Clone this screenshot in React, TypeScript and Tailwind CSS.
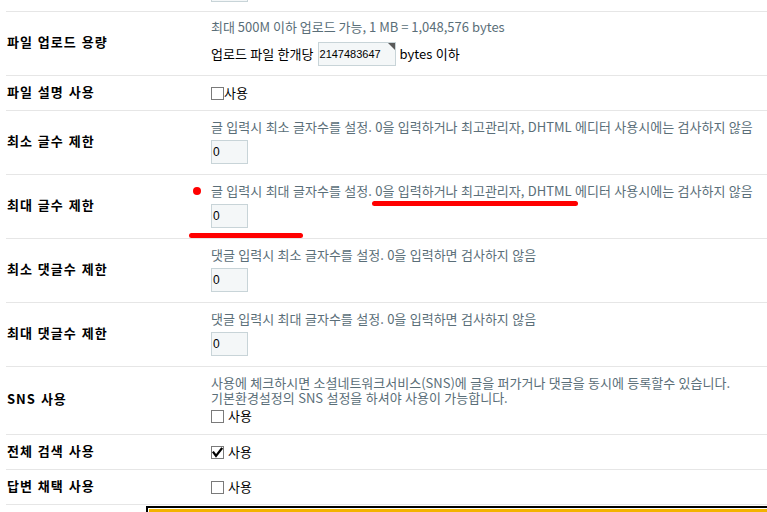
import React from "react";

function CheckBox({ checked }: { checked?: boolean }) {
  return (
    <span className="relative inline-block w-[13px] h-[13px] shrink-0 border border-[#7a7a7a] bg-white">
      {checked && (
        <svg className="absolute left-0 top-0" width="11" height="11" viewBox="0 0 11 11">
          <path d="M1.5 5.5 L4 9 L9.5 1.8" fill="none" stroke="#000" strokeWidth="2.2" strokeLinecap="square" />
        </svg>
      )}
    </span>
  );
}

function NumBox({ value }: { value: string }) {
  return (
    <div className="flex items-center w-[37px] h-[24px] border border-[#c8d4d8] bg-[#f4f7f8] pl-[1px] font-['Liberation_Sans',sans-serif] text-[12px] text-black">
      {value}
    </div>
  );
}

function Label({ children }: { children: React.ReactNode }) {
  return (
    <div className="w-[205px] shrink-0 pl-[1px] pb-[3px] flex items-center font-bold text-[13px] tracking-[1px] [word-spacing:1px] text-black">
      {children}
    </div>
  );
}

export default function App() {
  return (
    <div className="relative h-[512px] w-[767px] overflow-hidden bg-white font-['Noto_Sans_CJK_KR','Noto_Sans',sans-serif] text-[13px] [word-spacing:0.5px]">
      <div className="ml-[6px]">
        {/* partial top row */}
        <div className="flex h-[12px] overflow-hidden border-b border-[#e6e6e6]">
          <div className="w-[205px] shrink-0" />
          <div className="mt-[-22px]">
            <NumBox value="" />
          </div>
        </div>

        {/* 파일 업로드 용량 */}
        <div className="flex h-[64px] border-b border-[#e6e6e6]">
          <Label>파일 업로드 용량</Label>
          <div className="pt-[7px]">
            <div className="leading-[16px] text-[#5a6e78] [word-spacing:0px]">최대 500M 이하 업로드 가능, 1 MB = 1,048,576 bytes</div>
            <div className="mt-[7px] flex items-center gap-[4px] text-black">
              <span>업로드 파일 한개당</span>
              <div className="relative flex items-center w-[78px] h-[24px] border border-[#c8d4d8] bg-[#f4f7f8] pl-[1px] font-['Liberation_Sans',sans-serif] text-[11px] text-black">
                2147483647
                <svg className="absolute right-0 top-0" width="7" height="7" viewBox="0 0 7 7">
                  <path d="M0 0 H7 V7 Z" fill="#5a5a5a" />
                </svg>
              </div>
              <span>bytes 이하</span>
            </div>
          </div>
        </div>

        {/* 파일 설명 사용 */}
        <div className="flex h-[35px] border-b border-[#e6e6e6]">
          <Label>파일 설명 사용</Label>
          <div className="flex items-center text-black">
            <CheckBox />
            <span>사용</span>
          </div>
        </div>

        {/* 최소 글수 제한 */}
        <div className="flex h-[64px] border-b border-[#e6e6e6]">
          <Label>최소 글수 제한</Label>
          <div className="pt-[8px]">
            <div className="leading-[16px] text-[#5a6e78]">
              글 입력시 최소 글자수를 설정. 0을 입력하거나 최고관리자, DHTML 에디터 사용시에는 검사하지 않음
            </div>
            <div className="mt-[5px]">
              <NumBox value="0" />
            </div>
          </div>
        </div>

        {/* 최대 글수 제한 */}
        <div className="flex h-[64px] border-b border-[#e6e6e6]">
          <Label>최대 글수 제한</Label>
          <div className="relative pt-[8px]">
            <span className="absolute left-[-18px] top-[12px] w-[8px] h-[8px] rounded-full bg-[#ff0000]" />
            <div className="leading-[16px] text-[#5a6e78]">
              글 입력시 최대 글자수를 설정. 0을 입력하거나 최고관리자, DHTML 에디터 사용시에는 검사하지 않음
            </div>
            <div className="mt-[5px]">
              <NumBox value="0" />
            </div>
          </div>
        </div>

        {/* 최소 댓글수 제한 */}
        <div className="flex h-[64px] border-b border-[#e6e6e6]">
          <Label>최소 댓글수 제한</Label>
          <div className="pt-[8px]">
            <div className="leading-[16px] text-[#5a6e78]">댓글 입력시 최소 글자수를 설정. 0을 입력하면 검사하지 않음</div>
            <div className="mt-[5px]">
              <NumBox value="0" />
            </div>
          </div>
        </div>

        {/* 최대 댓글수 제한 */}
        <div className="flex h-[64px] border-b border-[#e6e6e6]">
          <Label>최대 댓글수 제한</Label>
          <div className="pt-[8px]">
            <div className="leading-[16px] text-[#5a6e78]">댓글 입력시 최대 글자수를 설정. 0을 입력하면 검사하지 않음</div>
            <div className="mt-[5px]">
              <NumBox value="0" />
            </div>
          </div>
        </div>

        {/* SNS 사용 */}
        <div className="flex h-[68px] border-b border-[#e6e6e6]">
          <Label>SNS 사용</Label>
          <div className="pt-[8px]">
            <div className="leading-[15px] text-[#5a6e78]">
              사용에 체크하시면 소셜네트워크서비스(SNS)에 글을 퍼가거나 댓글을 동시에 등록할수 있습니다.
            </div>
            <div className="leading-[15px] text-[#5a6e78]">기본환경설정의 SNS 설정을 하셔야 사용이 가능합니다.</div>
            <div className="mt-[3px] flex h-[16px] items-center gap-[4px] text-black">
              <CheckBox />
              <span>사용</span>
            </div>
          </div>
        </div>

        {/* 전체 검색 사용 */}
        <div className="flex h-[35px] border-b border-[#e6e6e6]">
          <Label>전체 검색 사용</Label>
          <div className="flex items-center gap-[4px] text-black">
            <CheckBox checked />
            <span>사용</span>
          </div>
        </div>

        {/* 답변 채택 사용 */}
        <div className="flex h-[35px] border-b border-[#e6e6e6]">
          <Label>답변 채택 사용</Label>
          <div className="flex items-center gap-[4px] text-black">
            <CheckBox />
            <span>사용</span>
          </div>
        </div>

        {/* yellow box */}
        <div className="ml-[140px] mt-[1px] h-[24px] border-l-2 border-t-2 border-black bg-white pl-[1px] pt-[1px]">
          <div className="h-full bg-[#f3b300]" />
        </div>
      </div>

      {/* red annotation strokes */}
      <div className="absolute left-[189px] top-[233px] h-[5px] w-[114px] rounded-full bg-[#ff0000]" />
      <div className="absolute left-[372px] top-[201px] h-[5px] w-[206px] rounded-full bg-[#ff0000]" />
    </div>
  );
}
